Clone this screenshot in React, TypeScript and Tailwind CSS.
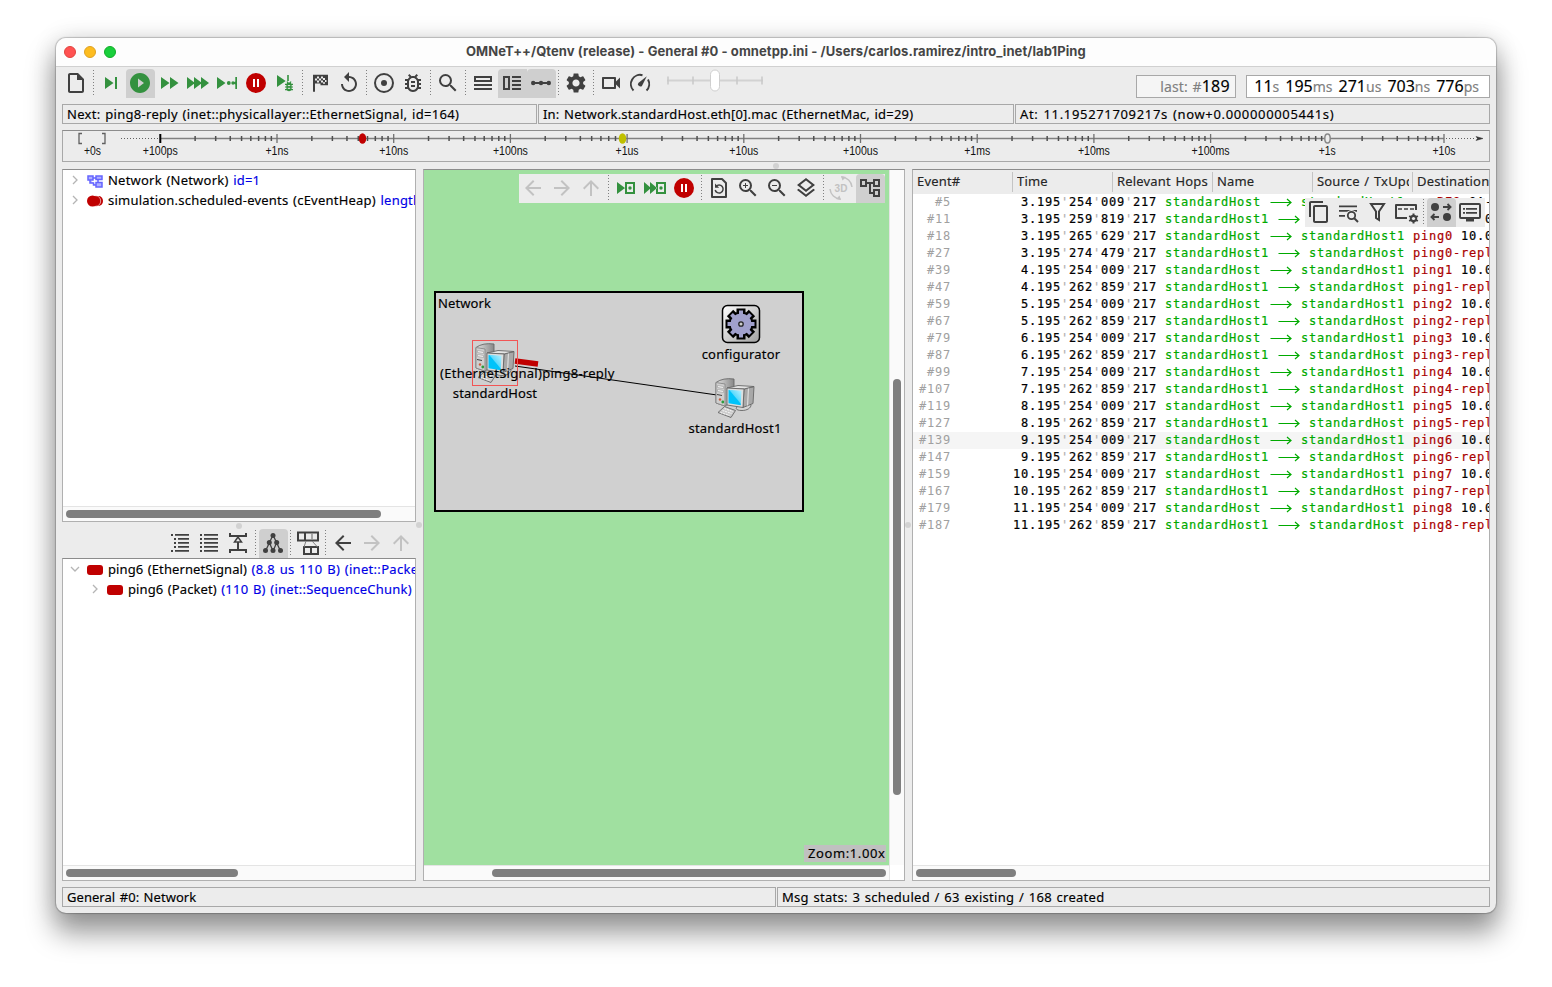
import React from "react";
import {
  MdArrowBack, MdArrowForward, MdArrowUpward, MdContentCopy, MdFastForward, MdOutlineAccountTree,
  MdOutlineBugReport, MdOutlineInsertDriveFile, MdOutlineLayers, MdOutlineVideocam,
  MdPlayCircleFilled, MdReplay, MdSearch, MdSettings, MdSkipNext, MdZoomIn, MdZoomOut,
} from "react-icons/md";

type Kids = { children?: React.ReactNode };

function Btn({ children, on, left, right, tone = "text-[#404040]" }: Kids & { on?: boolean; left?: boolean; right?: boolean; tone?: string }) {
  return (
    <div className={`h-[29px] w-[29px] shrink-0 pl-[2px] pt-[2px] ${tone} ${on ? "bg-[#cfcfcf]" : ""} ${left ? "rounded-tl-[4px]" : ""} ${right ? "rounded-tr-[4px]" : ""}`}>
      {children}
    </div>
  );
}

function Sep() {
  return (
    <div className="h-[29px] w-[6px] shrink-0 pl-[2px] pt-[1px]">
      <svg width="1" height="26"><path d="M.5 0V26" stroke="#808080" strokeDasharray="1 2" /></svg>
    </div>
  );
}

function G({ children }: Kids) {
  return <svg width="24" height="24" viewBox="0 0 24 24" fill="currentColor" className="block overflow-visible">{children}</svg>;
}

const GREEN = "text-[#34913f]";
const RED = "text-[#c00000]";
const DIM = "text-[#c2c2c2]";

function Stop() {
  return (
    <G>
      <circle cx="12" cy="12" r="10" />
      <path d="M9 8h2v8H9zM13 8h2v8h-2z" fill="#fff" />
    </G>
  );
}

function MainToolbar() {
  return (
    <div className="flex h-[37px] pl-[6px] pr-[6px] pt-[2px]">
      <Btn><MdOutlineInsertDriveFile size={24} /></Btn>
      <Sep />
      <Btn tone={GREEN}><MdSkipNext size={24} /></Btn>
      <Btn tone={GREEN} on left right><MdPlayCircleFilled size={24} /></Btn>
      <Btn tone={GREEN}><MdFastForward size={24} /></Btn>
      <Btn tone={GREEN}><G><path d="M1 18l8-6-8-6zM8 18l8-6-8-6zM15 18l8-6-8-6z" /></G></Btn>
      <Btn tone={GREEN}>
        <G><path d="M2 18l8.500-6L2 6zM20.300 6h1.700v12h-1.700v-4.500l-2.500-1.500 2.500-1.500z" /><circle cx="13.800" cy="12" r="1.900" /><circle cx="18" cy="12" r="1.700" /></G>
      </Btn>
      <Btn tone={RED}><Stop /></Btn>
      <Btn tone={GREEN}>
        <G>
          <path d="M4 4l8.700 6L4 16zM14.200 4h1.600v6h-1.600z" />
          <rect x="13.400" y="11.600" width="5.200" height="8.600" rx="2.400" />
          <path d="M12 13.300h8M12 16h8M12 18.700h8M14 10.500l1.200 1.800M18 10.500l-1.200 1.800" stroke="currentColor" strokeWidth="1.200" />
          <path d="M14.800 14.600h2.400M14.800 17.300h2.400" stroke="#ececec" strokeWidth="1" />
        </G>
      </Btn>
      <Sep />
      <Btn>
        <G>
          <path d="M5 3.700h15v10.600H12.500V12.500H7V20.700H5z" />
          <path d="M9 5.500h2v2H9zM13 5.500h2v2h-2zM7 7.500h2v2H7zM11 7.500h2v2h-2zM15 7h2v2h-2zM9 9.500h2v2H9zM13 9.500h2v2h-2zM17 9h1.500v2H17zM15 11.300h2v1.500h-2z" fill="#ececec" />
        </G>
      </Btn>
      <Btn><MdReplay size={24} /></Btn>
      <Sep />
      <Btn><G><circle cx="12" cy="12" r="9" fill="none" stroke="currentColor" strokeWidth="2" /><circle cx="12" cy="12" r="3" /></G></Btn>
      <Btn><MdOutlineBugReport size={24} /></Btn>
      <Sep />
      <Btn><MdSearch size={24} /></Btn>
      <Sep />
      <Btn><G><path d="M3 5h18v6H3zM5 7v2h14V7zM3 13h18v2H3zM3 17h18v2H3z" fillRule="evenodd" /></G></Btn>
      <Btn on left><G><path d="M3 5h7v14H3zM5 7v10h3V7zM12 5h9v2h-9zM12 9h9v2h-9zM12 13h9v2h-9zM12 17h9v2h-9z" fillRule="evenodd" /></G></Btn>
      <Btn on left right><G><path d="M4 11h16v2H4z" /><circle cx="4.200" cy="12" r="2.200" /><circle cx="12" cy="12" r="2.200" /><circle cx="19.800" cy="12" r="2.200" /></G></Btn>
      <Sep />
      <Btn><MdSettings size={24} /></Btn>
      <Sep />
      <Btn><MdOutlineVideocam size={24} /></Btn>
      <Btn>
        <G>
          <path d="M5.500 19.500A9.200 9.200 0 0 1 14.500 4.200M20 8.500a9.200 9.200 0 0 1-1.500 11" fill="none" stroke="currentColor" strokeWidth="2" />
          <path d="M18.800 5.200L14.200 14.400a2.300 2.300 0 1 1-3.900-2.500z" />
        </G>
      </Btn>
      <svg width="96" height="29" className="ml-[12px] block">
        <path d="M0 11.500H96" stroke="#d2d2d2" strokeWidth="2" />
        <path d="M1 7.500v8M26 7.500v8M70 7.500v8M95 7.500v8" stroke="#c8c8c8" strokeWidth="1.500" />
        <rect x="43.500" y="1" width="9" height="21" rx="4.500" fill="#fff" stroke="#cfcfcf" strokeWidth="1" />
      </svg>
      <div className="ml-auto mt-[6px] flex gap-[10px] whitespace-nowrap">
        <div className="flex h-[23px] w-[100px] items-baseline justify-end border border-[#a8a8a8] bg-[#f5f5f5] pr-[5px] leading-[21px] text-[#808080]">
          <span className="text-[14px] tracking-[0.1px]">last: #</span><span className="text-[16px] text-black tracking-[0.3px]">189</span>
        </div>
        <div className="flex h-[23px] w-[244px] items-baseline justify-end border border-[#a8a8a8] bg-white pr-[10px] text-[14px] leading-[21px] tracking-normal text-[#808080]">
          {[["11", "s"], ["195", "ms"], ["271", "us"], ["703", "ns"], ["776", "ps"]].map(([n, u], i) => (
            <span key={u} className={i ? "ml-[6px]" : ""}><span className="text-[16px] text-black">{n}</span>{u}</span>
          ))}
        </div>
      </div>
    </div>
  );
}

const DECADES = ["+100ps", "+1ns", "+10ns", "+100ns", "+1us", "+10us", "+100us", "+1ms", "+10ms", "+100ms", "+1s", "+10s"];
const LABEL_W = [35, 23, 29, 35, 23, 29, 35, 26, 32, 38, 17, 23];
const STEP = 116.7;

function Timeline() {
  return (
    <div className="mx-[6px] mt-[6px] h-[32px] border border-[#a8a8a8] border-t-[#8c8c8c]">
      <svg width="1426" height="30" className="block" fontFamily="Liberation Sans, Arial, sans-serif" fontSize="12">
        <path d="M97 7.500H1381" stroke="#808080" strokeWidth="1.600" />
        {DECADES.map((d, i) => (
          <g key={d}>
            <path d={`M${97.3 + i * STEP} 3v9`} stroke={i ? "#707070" : "#000"} strokeWidth={i ? 1.3 : 2} />
            {i < 11 && [2, 3, 4, 5, 6, 7, 8, 9].map((k) => (
              <path key={k} d={`M${97 + (i + Math.log10(k)) * STEP} 5v5`} stroke="#505050" strokeWidth="1.500" />
            ))}
          </g>
        ))}
        <path d="M58 7.500H97M1383 7.500h30" stroke="#606060" strokeDasharray="1 2" />
        <path d="M1413 5.500l7 2-7 2 1.500-2z" fill="#333" stroke="#333" strokeWidth=".5" />
        <path d="M19 2.500h-3v10h3M39 2.500h3v10h-3" fill="none" stroke="#606060" strokeWidth="1.300" />
        <ellipse cx="299.500" cy="7.500" rx="3.700" ry="5.300" fill="#c00000" />
        <ellipse cx="559.500" cy="7.500" rx="3.700" ry="5.300" fill="#c0c000" />
        <ellipse cx="1264.500" cy="7.500" rx="2.700" ry="4.500" fill="#ececec" stroke="#888" strokeWidth="1.500" />
        <g fill="#111">
          <text x="21" y="24" textLength="17" lengthAdjust="spacingAndGlyphs">+0s</text>
          {DECADES.map((d, i) => (
            <text key={d} x={97.3 + i * STEP - LABEL_W[i] / 2} y="24" textLength={LABEL_W[i]} lengthAdjust="spacingAndGlyphs">{d}</text>
          ))}
        </g>
      </svg>
    </div>
  );
}

function HScroll({ bar }: { bar: string }) {
  return (
    <div className="h-[15px] w-full shrink-0 border-t border-[#e4e4e4] bg-[#fafafa] pt-[3px]">
      <div className={`h-[8px] rounded-full bg-[#7f7f7f] ${bar}`} />
    </div>
  );
}

function Chevron({ down }: { down?: boolean }) {
  return (
    <svg width="10" height="10" viewBox="0 0 10 10" className="-mt-[2px] block shrink-0" fill="none" stroke="#b5b5b5" strokeWidth="1.300">
      <path d={down ? "M1 3l4 4 4-4" : "M3 1l4 4-4 4"} />
    </svg>
  );
}

const Dot = () => <div className="h-[6px] w-[6px] shrink-0 rounded-full bg-[#d2d2d2]" />;

function LeftColumn() {
  return (
    <div className="flex w-[354px] shrink-0 flex-col">
      <div className="flex h-[353px] flex-col overflow-hidden border border-[#b0b0b0] border-t-[#8c8c8c] bg-white">
        <div className="flex-1 whitespace-nowrap pt-px">
          <div className="flex h-[20px] items-center pl-[7px]">
            <Chevron />
            <svg width="16" height="13" className="ml-[7px] mr-[5px] shrink-0" fill="#b0b0ff" stroke="#6464ff" strokeWidth="1.500">
              <path d="M1 1h5v4H1zM9 1h6v3.500H9zM9 7.500h6v4.500H9zM6 3h3M3 5v3h3.500v2H9M11 4.500v3" />
            </svg>
            <span className="tracking-[0.22px]">Network (Network) <span className="text-[#0000e6]">id=1</span></span>
          </div>
          <div className="flex h-[20px] items-center pl-[7px]">
            <Chevron />
            <svg width="16" height="12" className="ml-[7px] mr-[5px] shrink-0" fill="#c00000">
              <ellipse cx="11.500" cy="6" rx="4.500" ry="5" /><ellipse cx="9" cy="6" rx="4.700" ry="5.200" stroke="#fff" strokeWidth=".6" /><ellipse cx="5.500" cy="6" rx="5.500" ry="5.500" />
            </svg>
            <span className="tracking-[0.22px]">simulation.scheduled-events (cEventHeap) <span className="text-[#0000e6]">length=3</span></span>
          </div>
        </div>
        <HScroll bar="ml-[3px] w-[315px]" />
      </div>
      <div className="flex h-[36px] flex-col">
        <div className="flex h-[7px] justify-center pt-px"><Dot /></div>
        <div className="flex h-[29px] justify-end">
          <Btn>
            <G>
              <path d="M7 3h14v1.700H7zM10 7h11v1.700H10zM10 11h11v1.700H10zM10 15h11v1.700H10zM7 19h14v1.700H7z" />
              <path d="M3 3h2v2H3zM6 7h2v2H6zM6 11h2v2H6zM6 15h2v2H6zM3 19h2v2H3z" />
            </G>
          </Btn>
          <Btn><G><path d="M7 3h14v1.700H7zM7 7h14v1.700H7zM7 11h14v1.700H7zM7 15h14v1.700H7zM7 19h14v1.700H7zM3 3h2v2H3zM3 7h2v2H3zM3 11h2v2H3zM3 15h2v2H3zM3 19h2v2H3z" /></G></Btn>
          <Btn><G><path d="M4 2v3h16V2M4 22v-3h16v3M12 18V11" fill="none" stroke="currentColor" strokeWidth="2" /><path d="M12 6l-3.500 5h7z" fill="none" stroke="currentColor" strokeWidth="1.500" /></G></Btn>
          <Sep />
          <Btn on left right>
            <G>
              <path d="M12 4L4.500 20M12 4l7.500 16M8.500 12l3.500 8M15.500 12l-3 7" fill="none" stroke="currentColor" strokeWidth="1.300" />
              <circle cx="12" cy="4.500" r="2.500" /><circle cx="8.300" cy="11.500" r="2.500" /><circle cx="15.700" cy="11.500" r="2.500" />
              <circle cx="4.500" cy="19.500" r="2.500" /><circle cx="12" cy="19.500" r="2.500" /><circle cx="19.500" cy="19.500" r="2.500" />
            </G>
          </Btn>
          <Sep />
          <Btn>
            <G>
              <path d="M2 1.500h20v8H2zM9 1.500v8M8 16h14v7H8zM15 16v7" fill="none" stroke="currentColor" strokeWidth="2" />
              <path d="M16 2v7" stroke="#909090" strokeWidth="1.500" />
              <path d="M10 10l-2 6M16 10l5.500 6" stroke="#808080" strokeWidth="1" />
            </G>
          </Btn>
          <Sep />
          <Btn><MdArrowBack size={24} /></Btn>
          <Btn tone={DIM}><MdArrowForward size={24} /></Btn>
          <Btn tone={DIM}><MdArrowUpward size={24} /></Btn>
        </div>
      </div>
      <div className="flex h-[323px] flex-col overflow-hidden border border-[#b0b0b0] border-t-[#8c8c8c] bg-white">
        <div className="flex-1 whitespace-nowrap pt-px">
          <div className="flex h-[20px] items-center pl-[7px]">
            <Chevron down />
            <div className="ml-[7px] mr-[5px] h-[10px] w-[16px] shrink-0 rounded-[3px] bg-[#c00000]" />
            <span className="tracking-[0.1px]">ping6 (EthernetSignal) <span className="tracking-[0.3px] text-[#0000e6]">(8.8 us 110 B) (inet::PacketProtocolTag)</span></span>
          </div>
          <div className="flex h-[20px] items-center pl-[27px]">
            <Chevron />
            <div className="ml-[7px] mr-[5px] h-[10px] w-[16px] shrink-0 rounded-[3px] bg-[#c00000]" />
            <span className="tracking-[0.1px]">ping6 (Packet) <span className="tracking-[0.22px] text-[#0000e6]">(110 B) (inet::SequenceChunk)</span></span>
          </div>
        </div>
        <HScroll bar="ml-[3px] w-[172px]" />
      </div>
    </div>
  );
}

function Host() {
  return (
    <svg width="42" height="42" viewBox="0 0 42 42" className="block">
      <defs>
        <linearGradient id="case" x1="0" x2="1"><stop offset="0" stopColor="#e2e2e2" /><stop offset="1" stopColor="#888" /></linearGradient>
        <linearGradient id="screen" x1="0" x2="1" y1="1" y2="0"><stop offset=".5" stopColor="#00c3fa" /><stop offset=".55" stopColor="#5fdafc" /><stop offset="1" stopColor="#b8f0ff" /></linearGradient>
      </defs>
      <g stroke="#666" strokeWidth=".9" strokeLinejoin="round">
        <path d="M2 5.500Q9 .5 20 2v22l-9 5-9-3z" fill="url(#case)" />
        <path d="M2 5.500l9 1.500v22l-9-3z" fill="#cfcfcf" stroke="#888" />
        <path d="M3.500 8.500l6 1v2l-6-1zM3.500 12.500l6 1v2l-6-1z" fill="#f2f2f2" stroke="#999" strokeWidth=".6" />
        <path d="M3 17.500l5 1" stroke="#333" />
        <path d="M23 30c0-2 14-5 14-2s-4 5.500-9 5.500-7-1.500-5-3.500z" fill="#d4d4d4" />
        <path d="M30 12l10-2.500-1 17-10 4z" fill="#a8a8a8" />
        <path d="M13 11l11-2.500 16 1L30 12z" fill="#e4e4e4" />
        <path d="M13 11l17 1-1 18.500L13 28z" fill="#dedede" />
        <path d="M34.500 11.500l-1 17" stroke="#ddd" strokeWidth="1.200" />
        <path d="M10.500 29.500l11 4-4.500 7L4 35.500z" fill="#c8c8c8" />
      </g>
      <path d="M14.500 12.800l13 1-.7 14.500-12.300-2z" fill="url(#screen)" />
      <path d="M10.500 31.500l8.500 3M8.500 33.500l9 3M6.500 35.500l9 3" fill="none" stroke="#f0f0f0" strokeWidth="1.200" strokeDasharray="2 .8" />
      <circle cx="6" cy="22.500" r="1.200" fill="#c86040" /><circle cx="8.800" cy="25" r="1.400" fill="#2c9c3c" />
    </svg>
  );
}

function Configurator() {
  return (
    <svg width="40" height="40" viewBox="0 0 40 40" className="block">
      <defs>
        <linearGradient id="tile" x1="0" x2="1" y1="0" y2="1"><stop offset="0" stopColor="#fff" /><stop offset="1" stopColor="#a0a0a0" /></linearGradient>
      </defs>
      <rect x="1.500" y="1.500" width="37" height="37" rx="5" fill="url(#tile)" stroke="#000" strokeWidth="1.500" />
      <g fill="#000">
        {[0, 45, 90, 135].map((a) => <rect key={a} x="15.500" y="4.500" width="9" height="31" transform={`rotate(${a} 20 20)`} />)}
        <circle cx="20" cy="20" r="12.500" />
      </g>
      <g fill="#a0a0cc">
        <circle cx="20" cy="20" r="10.500" />
        {[0, 45, 90, 135].map((a) => <path key={a} d="M18 6.500h4v27h-4z" transform={`rotate(${a} 20 20)`} />)}
      </g>
      <circle cx="20" cy="20" r="2.200" fill="#ccc" stroke="#222" strokeWidth="1.300" />
    </svg>
  );
}

function Canvas() {
  return (
    <div className="relative h-[695px] w-[465px] shrink-0 overflow-hidden bg-[#a0e0a0] tracking-[0.1px]">
      <div className="absolute left-[10px] top-[121px] h-[221px] w-[370px] border-2 border-black bg-[#d0d0d0]" />
      <span className="absolute left-[14px] top-[124px] leading-[18px]">Network</span>
      <svg width="465" height="695" className="absolute left-0 top-0">
        <path d="M91 196L293 225" stroke="#000" strokeWidth="1" />
        <path d="M91 191L114 194" stroke="#c00000" strokeWidth="5.500" />
      </svg>
      <div className="absolute left-[50px] top-[172px]"><Host /></div>
      <div className="absolute left-[290px] top-[207px]"><Host /></div>
      <div className="absolute left-[297px] top-[134px]"><Configurator /></div>
      <div className="absolute left-[48px] top-[170px] h-[46px] w-[46px] border border-[#f25555]" />
      <span className="absolute left-[16px] top-[194px] whitespace-nowrap leading-[18px] tracking-[0.28px]">(EthernetSignal)ping8-reply</span>
      <span className="absolute left-[21px] top-[214px] w-[100px] text-center leading-[18px]">standardHost</span>
      <span className="absolute left-[257px] top-[249px] w-[108px] text-center leading-[18px] tracking-[0.2px]">standardHost1</span>
      <span className="absolute left-[267px] top-[175px] w-[100px] text-center leading-[18px] tracking-[0.2px]">configurator</span>
      <div className="absolute left-[95px] top-[4px] flex h-[29px] bg-[#ececec]">
        <Btn tone={DIM}><MdArrowBack size={24} /></Btn>
        <Btn tone={DIM}><MdArrowForward size={24} /></Btn>
        <Btn tone={DIM}><MdArrowUpward size={24} /></Btn>
        <Sep />
        <Btn tone={GREEN}><G><path d="M3 18l8-6-8-6zM11 6h10v12H11zM13 8v8h6V8z" fillRule="evenodd" /><circle cx="16" cy="12" r="1.700" /></G></Btn>
        <Btn tone={GREEN}><G><path d="M1 18l7-6-7-6zM7 18l7-6-7-6zM13 6h10v12H13z" /><path d="M15 8h6v8h-6z" fill="#ececec" /><circle cx="18" cy="12" r="1.700" /></G></Btn>
        <Btn tone={RED}><Stop /></Btn>
        <Sep />
        <Btn>
          <G>
            <path d="M5 3h10l4 4v14H5z" fill="none" stroke="currentColor" strokeWidth="2" strokeLinejoin="round" />
            <path d="M9 10.500a4 4 0 1 1-.8 3.500" fill="none" stroke="currentColor" strokeWidth="1.500" /><path d="M8 7.500v4.200h4.200z" />
          </G>
        </Btn>
        <Btn><MdZoomIn size={24} /></Btn>
        <Btn><MdZoomOut size={24} /></Btn>
        <Btn><MdOutlineLayers size={24} /></Btn>
        <Sep />
        <Btn tone={DIM}>
          <G>
            <text x="5.500" y="16" fontSize="11" fontWeight="bold" fontFamily="Liberation Sans, sans-serif" textLength="13" lengthAdjust="spacingAndGlyphs">3D</text>
            <path d="M12.500 1a11 11 0 0 1 10.500 10M11.500 23A11 11 0 0 1 1 13" fill="none" stroke="currentColor" strokeWidth="1.500" />
            <path d="M12 0l5 1-3.500 3.500zM12 24l-5-1 3.500-3.500z" />
          </G>
        </Btn>
        <Btn on left right><MdOutlineAccountTree size={24} /></Btn>
      </div>
      <div className="absolute bottom-[3px] right-[3px] h-[17px] w-[82px] bg-[#c0c0c0] pl-[4px] leading-[16px] tracking-[0.6px]">Zoom:1.00x</div>
    </div>
  );
}

function CenterColumn() {
  return (
    <div className="flex h-full w-[482px] shrink-0 flex-col border border-[#b0b0b0] border-t-[#8c8c8c] bg-white">
      <div className="flex">
        <Canvas />
        <div className="h-[695px] w-[15px] border-l border-[#e4e4e4] bg-[#fafafa] pl-[3px] pt-[209px]">
          <div className="h-[416px] w-[8px] rounded-full bg-[#7f7f7f]" />
        </div>
      </div>
      <div className="flex">
        <div className="w-[465px]"><HScroll bar="ml-[68px] w-[394px]" /></div>
        <div className="w-[15px] border-l border-[#e4e4e4]" />
      </div>
    </div>
  );
}

const A = "standardHost";
const B = "standardHost1";
const EVENTS: [number, string, string, string][] = [
  [5, "3.195'254'009'217", "arpREQ", "0A-AA"],
  [11, "3.195'259'819'217", "arpREPLY", "0A-AA"],
  [18, "3.195'265'629'217", "ping0", "10.0.0.1"],
  [27, "3.195'274'479'217", "ping0-reply", ""],
  [39, "4.195'254'009'217", "ping1", "10.0.0.1"],
  [47, "4.195'262'859'217", "ping1-reply", ""],
  [59, "5.195'254'009'217", "ping2", "10.0.0.1"],
  [67, "5.195'262'859'217", "ping2-reply", ""],
  [79, "6.195'254'009'217", "ping3", "10.0.0.1"],
  [87, "6.195'262'859'217", "ping3-reply", ""],
  [99, "7.195'254'009'217", "ping4", "10.0.0.1"],
  [107, "7.195'262'859'217", "ping4-reply", ""],
  [119, "8.195'254'009'217", "ping5", "10.0.0.1"],
  [127, "8.195'262'859'217", "ping5-reply", ""],
  [139, "9.195'254'009'217", "ping6", "10.0.0.1"],
  [147, "9.195'262'859'217", "ping6-reply", ""],
  [159, "10.195'254'009'217", "ping7", "10.0.0.1"],
  [167, "10.195'262'859'217", "ping7-reply", ""],
  [179, "11.195'254'009'217", "ping8", "10.0.0.1"],
  [187, "11.195'262'859'217", "ping8-reply", ""],
];

function EventRow({ e, i }: { e: [number, string, string, string]; i: number }) {
  const [id, time, name, info] = e;
  const forward = i % 2 === 0;
  return (
    <div className={`flex h-[17px] whitespace-pre leading-[17px] ${id === 139 ? "bg-[#f5f5f5]" : ""}`}>
      <span className="w-[38px] shrink-0 text-right text-[#a0a0a0] [-webkit-text-stroke:0]">#{id}</span>
      <span className="w-[206px] shrink-0 text-right">
        {time.split("'").map((p, k) => <React.Fragment key={k}>{k > 0 && <span className="text-[#b0b0b0]">'</span>}{p}</React.Fragment>)}
      </span>
      <span className="ml-[8px] flex w-[248px] shrink-0 text-[#00aa00]">
        {forward ? A : B}
        <svg width="24" height="17" className="mx-[8px] shrink-0" fill="none" stroke="currentColor" strokeWidth="1.200"><path d="M1.500 8.500h20.500M18 5l4 3.500L18 12" /></svg>
        {forward ? B : A}
      </span>
      <span className="text-[#aa0000]">{name}</span><span> {info}</span>
    </div>
  );
}

function EventLog() {
  return (
    <div className="relative flex h-full w-[578px] shrink-0 flex-col overflow-hidden border border-[#b0b0b0] border-t-[#8c8c8c] bg-white">
      <div className="flex h-[24px] shrink-0 bg-[#ececec] pt-[2px] tracking-[0.18px] text-[#262626]">
        {["Event#", "Time", "Relevant Hops", "Name", "Source / TxUpdate", "Destination"].map((h) => (
          <div key={h} className="h-[20px] w-[100px] shrink-0 border-r border-[#c4c4c4] pl-[4px] leading-[18px]">
            <div className="w-[92px] overflow-hidden whitespace-nowrap">{h}</div>
          </div>
        ))}
      </div>
      <div className="flex-1 font-['DejaVu_Sans_Mono',monospace] text-[12px] tracking-[0.776px] [word-spacing:0] [-webkit-text-stroke:0.2px]">
        {EVENTS.map((e, i) => <EventRow key={e[0]} e={e} i={i} />)}
      </div>
      <HScroll bar="ml-[3px] w-[100px]" />
      <div className="absolute right-[4px] top-[28px] flex h-[29px] bg-[#ececec]">
        <Btn><MdContentCopy size={24} /></Btn>
        <Btn>
          <G>
            <path d="M3 5.500h18v1.800H3zM3 10h18v1.800H3zM3 15h6v1.800H3z" />
            <circle cx="15.500" cy="15.500" r="5.500" fill="#ececec" /><circle cx="15.500" cy="15.500" r="3.700" fill="none" stroke="currentColor" strokeWidth="1.800" /><path d="M18 18l4 4" stroke="currentColor" strokeWidth="2" />
          </G>
        </Btn>
        <Btn><G><path d="M6 4h13l-5 7.500v8.500l-3-2v-6.500z" fill="none" stroke="currentColor" strokeWidth="2" /></G></Btn>
        <Btn>
          <G>
            <path d="M22 10V5H2v13h11" fill="none" stroke="currentColor" strokeWidth="2" strokeLinejoin="round" />
            <path d="M4 9h16" stroke="currentColor" strokeWidth="1.700" strokeDasharray="4 2" />
            <path d="M19.500 13.500v10M15.200 16l8.600 5M23.800 16l-8.600 5" stroke="currentColor" strokeWidth="2" /><circle cx="19.500" cy="18.500" r="2.700" fill="none" stroke="currentColor" strokeWidth="2" /><circle cx="19.500" cy="18.500" r="1.600" fill="#ececec" />
          </G>
        </Btn>
        <Sep />
        <Btn on left right>
          <G>
            <circle cx="6" cy="7" r="4" /><circle cx="18" cy="17" r="4" />
            <path d="M14 7h7M18.500 4L21.500 7l-3 3M10 17H3M5.500 14l-3 3 3 3" fill="none" stroke="currentColor" strokeWidth="1.900" />
          </G>
        </Btn>
        <Btn>
          <G>
            <rect x="2" y="4" width="20" height="14" rx="1" fill="none" stroke="currentColor" strokeWidth="2" />
            <path d="M5 8h2v1.800H5zM8 8h11v1.800H8zM5 12h2v1.800H5zM8 12h11v1.800H8zM8 19h8v2.500H8z" />
          </G>
        </Btn>
      </div>
    </div>
  );
}

function Field({ children, w }: Kids & { w: string }) {
  return <div className={`h-[20px] shrink-0 whitespace-nowrap border border-[#a8a8a8] pl-[4px] leading-[19px] ${w}`}>{children}</div>;
}

export default function App() {
  return (
    <div className="h-[987px] w-[1552px] overflow-hidden bg-white pl-[56px] pt-[38px] font-['Noto_Sans',sans-serif] text-[13px] text-black [word-spacing:1px] [-webkit-text-stroke:0.15px]">
      <div className="h-[875px] w-[1440px] overflow-hidden rounded-[10px] bg-[#ececec] shadow-[0_0_1px_1px_rgba(0,0,0,0.2),0_18px_28px_2px_rgba(0,0,0,0.4),0_0_24px_rgba(0,0,0,0.12)]">
        <div className="flex h-[29px] items-center border-b border-[#d0d0d0] bg-[#fdfdfd] pl-[8px]">
          <div className="flex gap-[8px]">
            <div className="h-[12px] w-[12px] rounded-full border border-[#e0443e] bg-[#ff5252]" />
            <div className="h-[12px] w-[12px] rounded-full border border-[#dea123] bg-[#fdbc1f]" />
            <div className="h-[12px] w-[12px] rounded-full border border-[#12ac28] bg-[#19cf3c]" />
          </div>
          <div className="ml-[350px] whitespace-nowrap font-['Inter',sans-serif] text-[13px] font-bold tracking-[0.085px] text-[#454545] [word-spacing:0] [-webkit-text-stroke:0]">
            OMNeT++/Qtenv (release) - General #0 - omnetpp.ini - /Users/carlos.ramirez/intro_inet/lab1Ping
          </div>
        </div>
        <MainToolbar />
        <div className="flex gap-[1px] px-[6px]">
          <Field w="w-[475px] tracking-[0.3px]">Next: ping8-reply (inet::physicallayer::EthernetSignal, id=164)</Field>
          <Field w="w-[476px] tracking-[0.19px]">In: Network.standardHost.eth[0].mac (EthernetMac, id=29)</Field>
          <Field w="w-[475px] tracking-[0.66px]">At: 11.195271709217s (now+0.000000005441s)</Field>
        </div>
        <Timeline />
        <div className="flex h-[7px] justify-center pt-[1px]"><Dot /></div>
        <div className="flex h-[712px] px-[6px]">
          <LeftColumn />
          <div className="flex w-[7px] items-center"><Dot /></div>
          <CenterColumn />
          <div className="flex w-[7px] items-center"><Dot /></div>
          <EventLog />
        </div>
        <div className="mt-[6px] flex gap-[1px] px-[6px]">
          <Field w="w-[714px] tracking-[0.05px]">General #0: Network</Field>
          <Field w="w-[713px] tracking-[0.28px]">Msg stats: 3 scheduled / 63 existing / 168 created</Field>
        </div>
      </div>
    </div>
  );
}
